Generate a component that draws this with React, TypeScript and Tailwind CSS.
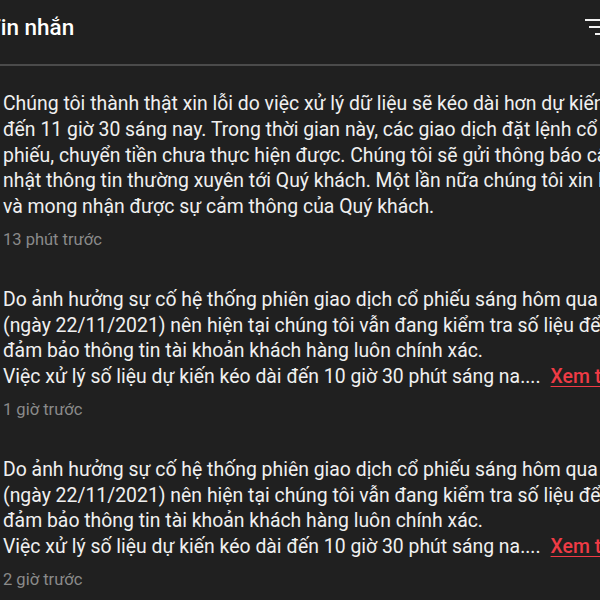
import { ReactNode } from 'react'

// one notification row: text lines are fixed, right side is cut by the viewport
function Message({ lines, time, more }: { lines: string[]; time: string; more?: boolean }) {
  return (
    <div className="flex flex-col">
      <div className="text-[19.4px] leading-[25.75px] text-[#f0f0f0] whitespace-nowrap">
        {lines.map((line, i) => (
          <div key={i}>
            {line}
            {more && i === lines.length - 1 && (
              <span className="ml-[10px] font-medium text-[#ef3b45] underline underline-offset-[3px]">Xem thêm</span>
            )}
          </div>
        ))}
      </div>
      <div className="mt-[10px] text-[16.5px] leading-[20px] text-[#8a8a8a]">{time}</div>
    </div>
  )
}

function Header(): ReactNode {
  return (
    <div className="flex h-[66px] shrink-0 items-center justify-between border-b-2 border-[#4b4b4b] pb-[8px]">
      <div className="ml-[-13px] text-[22.5px] font-medium text-white">Tin nhắn</div>
      <svg width="30" height="20" viewBox="0 0 30 20" className="mr-[-15px] mb-[2px] shrink-0">
        <rect x="0" y="2" width="30" height="2" fill="#f2f2f2" />
        <rect x="4" y="9" width="26" height="2" fill="#f2f2f2" />
        <rect x="10" y="16" width="20" height="2" fill="#f2f2f2" />
      </svg>
    </div>
  )
}

export default function App() {
  const secondBlock = [
    'Do ảnh hưởng sự cố hệ thống phiên giao dịch cổ phiếu sáng hôm qua',
    '(ngày 22/11/2021) nên hiện tại chúng tôi vẫn đang kiểm tra số liệu để',
    'đảm bảo thông tin tài khoản khách hàng luôn chính xác.',
    'Việc xử lý số liệu dự kiến kéo dài đến 10 giờ 30 phút sáng na....',
  ]

  return (
    <div
      className="flex h-[600px] w-[600px] flex-col overflow-hidden bg-[#202020]"
      style={{ fontFamily: 'Roboto, "Noto Sans", sans-serif' }}
    >
      <Header />
      <div className="flex flex-col gap-[37px] pl-[3px] pt-[25px]">
        <Message
          lines={[
            'Chúng tôi thành thật xin lỗi do việc xử lý dữ liệu sẽ kéo dài hơn dự kiến',
            'đến 11 giờ 30 sáng nay. Trong thời gian này, các giao dịch đặt lệnh cổ',
            'phiếu, chuyển tiền chưa thực hiện được. Chúng tôi sẽ gửi thông báo cập',
            'nhật thông tin thường xuyên tới Quý khách. Một lần nữa chúng tôi xin lỗi',
            'và mong nhận được sự cảm thông của Quý khách.',
          ]}
          time="13 phút trước"
        />
        <Message lines={secondBlock} time="1 giờ trước" more />
        <Message lines={secondBlock} time="2 giờ trước" more />
      </div>
    </div>
  )
}
